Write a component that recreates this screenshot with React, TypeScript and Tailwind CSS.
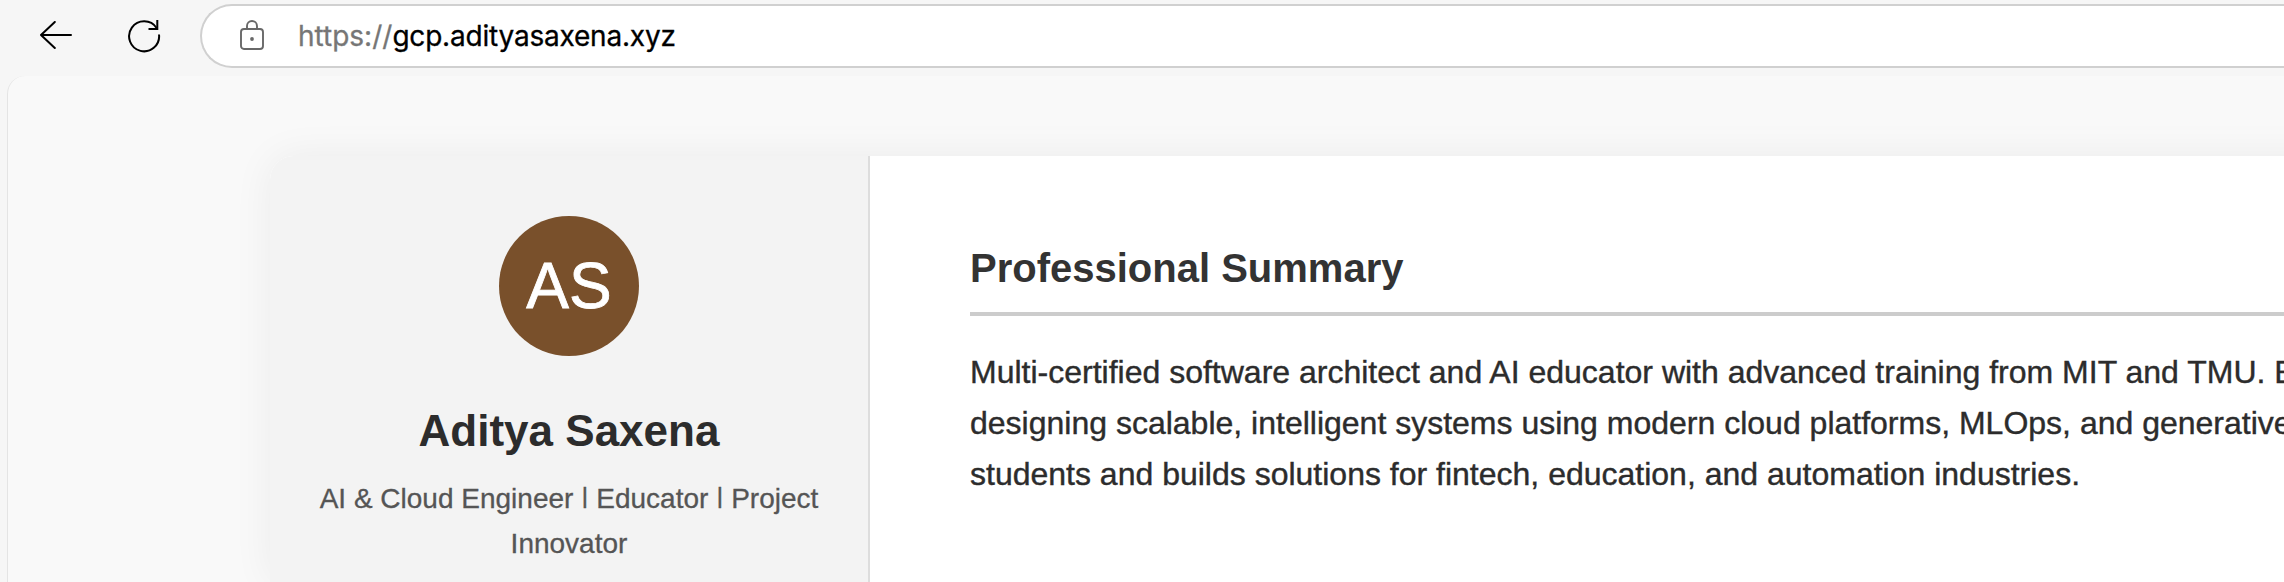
import React from "react";

function BackIcon() {
  return (
    <svg width="34" height="30" viewBox="0 0 34 30" fill="none" stroke="#000" strokeWidth="2" strokeLinecap="round" strokeLinejoin="round">
      <path d="M32 14H2M15.8 1L2 14L15.8 27" />
    </svg>
  );
}

function ReloadIcon() {
  return (
    <svg width="34" height="34" viewBox="0 0 34 34" fill="none" stroke="#000" strokeWidth="2">
      <path d="M32 15.5A15 15 0 1 1 29.6 9" />
      <path d="M30.3 1V10H21.5" />
    </svg>
  );
}

function LockIcon() {
  return (
    <svg width="24" height="32" viewBox="0 0 24 32" fill="none" stroke="#686868" strokeWidth="1.9">
      <rect x="1" y="9" width="22" height="20" rx="3" />
      <path d="M7 9V6a5 5 0 0 1 10 0V9" />
      <circle cx="12" cy="19" r="1.9" fill="#686868" stroke="none" />
    </svg>
  );
}

function Bar() {
  return <span className="inline-block w-[7.3px] text-center align-[5px] text-[22px] leading-none [-webkit-text-stroke:0.7px]">|</span>;
}

export default function App() {
  return (
    <div className="flex h-[582px] w-full flex-col overflow-hidden bg-[#f6f6f6] font-['Liberation_Sans',Arial,sans-serif]">
      <header className="flex h-[76px] shrink-0 items-start pt-1">
        <div className="flex h-16 w-[200px] shrink-0 items-center pl-[39px]">
          <BackIcon />
          <div className="ml-[54px]">
            <ReloadIcon />
          </div>
        </div>
        <div className="flex h-16 flex-1 items-center rounded-l-full border-2 border-r-0 border-[#d0d0d0] bg-white pl-[38px] font-[Inter,sans-serif] text-[28px]">
          <LockIcon />
          <span className="ml-[34px] whitespace-nowrap text-[#767676] [-webkit-text-stroke:0.3px]">
            https://<span className="tracking-[-0.2px] text-black">gcp.adityasaxena.xyz</span>
          </span>
        </div>
      </header>
      <div className="ml-[7px] flex flex-1 overflow-hidden rounded-tl-[18px] border-l border-[#e4e4e4] bg-[#f9f9f9] pl-[262px] pt-20">
        <main className="-mr-20 flex flex-1 rounded-tl-[24px] bg-white shadow-[0_0_40px_rgba(0,0,0,0.06)]">
          <aside className="flex w-[600px] shrink-0 flex-col items-center rounded-tl-[24px] border-r-2 border-[#ddd] bg-[#f3f3f3] pt-[60px]">
            <div className="flex size-[140px] items-center justify-center rounded-full bg-[#79502b] text-[64px] leading-none text-white [-webkit-text-stroke:0.8px]">
              AS
            </div>
            <h1 className="mt-10 text-[44px] font-bold leading-[70.4px] text-[#2c2c2c]">Aditya Saxena</h1>
            <p className="mt-[11px] whitespace-nowrap text-center text-[28px] leading-[44.8px] text-[#555] [-webkit-text-stroke:0.3px]">
              AI &amp; Cloud Engineer <Bar /> Educator <Bar /> Project
              <br />
              Innovator
            </p>
          </aside>
          <section className="min-w-0 flex-1 pl-[100px] pt-20">
            <h2 className="border-b-4 border-[#ccc] pb-3 text-[40px] font-bold leading-[64px] text-[#333]">Professional Summary</h2>
            <p className="mt-[31px] whitespace-nowrap text-[32px] leading-[51.2px] text-[#2c2c2c] [-webkit-text-stroke:0.4px]">
              Multi-certified software architect and AI educator with advanced training from MIT and TMU. E
              <br />
              designing scalable, intelligent systems using modern cloud platforms, MLOps, and generative
              <br />
              students and builds solutions for fintech, education, and automation industries.
            </p>
          </section>
        </main>
      </div>
    </div>
  );
}
